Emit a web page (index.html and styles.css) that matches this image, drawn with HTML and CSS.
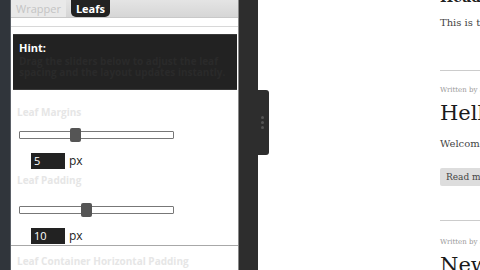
FILE: index.html
```html
<!DOCTYPE html>
<html>
<head>
<meta charset="utf-8">
<link rel="stylesheet" href="styles.css">
</head>
<body>
<div class="app">
  <div class="edge"></div>
  <div class="panel">
    <div class="tabs">
      <div class="tab">Wrapper</div>
      <div class="tab active">Leafs</div>
    </div>
    <div class="spacer"></div>
    <div class="hint">
      <div class="hint-title">Hint:</div>
      <div class="hint-text">Drag the sliders below to adjust the leaf spacing and the layout updates instantly.</div>
    </div>
    <div class="group">
      <div class="label">Leaf Margins</div>
      <div class="slider"><div class="thumb" style="left:50px"></div></div>
      <div class="field"><span class="box">5</span><span class="unit">px</span></div>
    </div>
    <div class="group g2">
      <div class="label">Leaf Padding</div>
      <div class="slider s2"><div class="thumb" style="left:61px"></div></div>
      <div class="field"><span class="box">10</span><span class="unit">px</span></div>
    </div>
    <div class="group g3">
      <div class="label">Leaf Container Horizontal Padding</div>
    </div>
  </div>
  <div class="frame">
    <div class="handle"><span></span><span></span><span></span></div>
  </div>
  <div class="page">
    <div class="post first">
      <div class="h-cut">Header</div>
      <p class="body">This is the text</p>
    </div>
    <div class="post second">
      <div class="meta">Written by admin</div>
      <div class="title">Hello</div>
      <p class="body">Welcome to the blog</p>
      <div class="btn">Read more</div>
    </div>
    <div class="post third">
      <div class="meta">Written by admin</div>
      <div class="title">News</div>
    </div>
  </div>
</div>
</body>
</html>
```
FILE: styles.css
```css
* { box-sizing: border-box; }
html, body { margin: 0; padding: 0; }
body { width: 480px; height: 270px; overflow: hidden; background: #fff; font-family: "Open Sans", "DejaVu Sans", sans-serif; }
.app { display: flex; height: 270px; }
.edge { width: 11px; flex: none; background: #30353b; border-right: 1px solid #5a5f66; }
.panel { width: 227px; flex: none; background: #fff; display: flex; flex-direction: column; overflow: hidden; }
.tabs { height: 18px; display: flex; gap: 5px; background: linear-gradient(#e4e4e4, #d6d6d6); border-bottom: 1px solid #c8c8c8; }
.tab { font-size: 11px; line-height: 18px; padding: 0 5px; color: #c4c4c4; background: #e9e9e9; }
.tab.active { background: #222; color: #fff; font-weight: bold; border-radius: 0 0 5px 5px; padding: 0 5px; }
.spacer { height: 9px; border-bottom: 1px solid #d8d8d8; }
.hint { margin: 7px 1px 0 2px; height: 56px; background: #222; border-top: 1px solid #3a3a3a; border-bottom: 1px solid #3a3a3a; padding: 6px 6px; }
.hint-title { color: #fff; font-weight: bold; font-size: 11px; line-height: 13px; }
.hint-text { color: #2a2a2a; font-size: 10px; line-height: 11px; margin-top: 2px; font-weight: bold; }
.group { padding: 16px 0 0 6px; }
.label { color: #e6e6e6; font-weight: bold; font-size: 10px; line-height: 12px; }
.slider { position: relative; margin: 13px 0 0 2px; width: 155px; height: 8px; border: 1px solid #777; background: #fff; border-radius: 1px; }
.thumb { position: absolute; top: -4px; width: 11px; height: 14px; background: #555; border-radius: 2px; }
.field { display: flex; align-items: center; margin: 13px 0 0 14px; }
.box { width: 34px; height: 16px; background: #222; color: #fff; font-size: 11px; line-height: 16px; padding-left: 3px; }
.unit { font-size: 12px; color: #222; margin-left: 4px; }
.g2 { padding-top: 5px; }
.s2 { margin-top: 20px; }
.g3 { margin-top: 1px; border-top: 1px solid #a8a8a8; padding-top: 9px; }
.frame { width: 20px; flex: none; background: #2d2d2d; border-left: 1px solid #888; position: relative; }
.handle { position: absolute; left: 19px; top: 90px; width: 11px; height: 65px; background: #2d2d2d; border-radius: 0 3px 3px 0; display: flex; flex-direction: column; align-items: center; justify-content: center; gap: 2px; padding-right: 3px; }
.handle span { width: 3px; height: 3px; border-radius: 50%; background: #555; }
.page { flex: 1; padding-left: 182px; overflow: hidden; font-family: "DejaVu Serif", serif; color: #333; white-space: nowrap; }
.post { border-bottom: 1px solid #ccc; }
.first { height: 81px; margin-top: -10px; }
.h-cut { font-size: 14px; font-weight: bold; line-height: 14px; color: #222; }
.body { font-size: 10px; margin: 13px 0 0; color: #444; }
.second { height: 150px; padding-top: 15px; }
.third { border-bottom: none; padding-top: 17px; }
.meta { font-size: 7px; color: #999; line-height: 9px; }
.title { font-size: 21px; line-height: 26px; color: #1a1a1a; margin-top: 5px; }
.second .body { margin-top: 12px; }
.btn { display: inline-block; margin-top: 19px; background: #ddd; font-size: 9px; line-height: 18px; padding: 0 6px; color: #444; border-radius: 2px; }
```
